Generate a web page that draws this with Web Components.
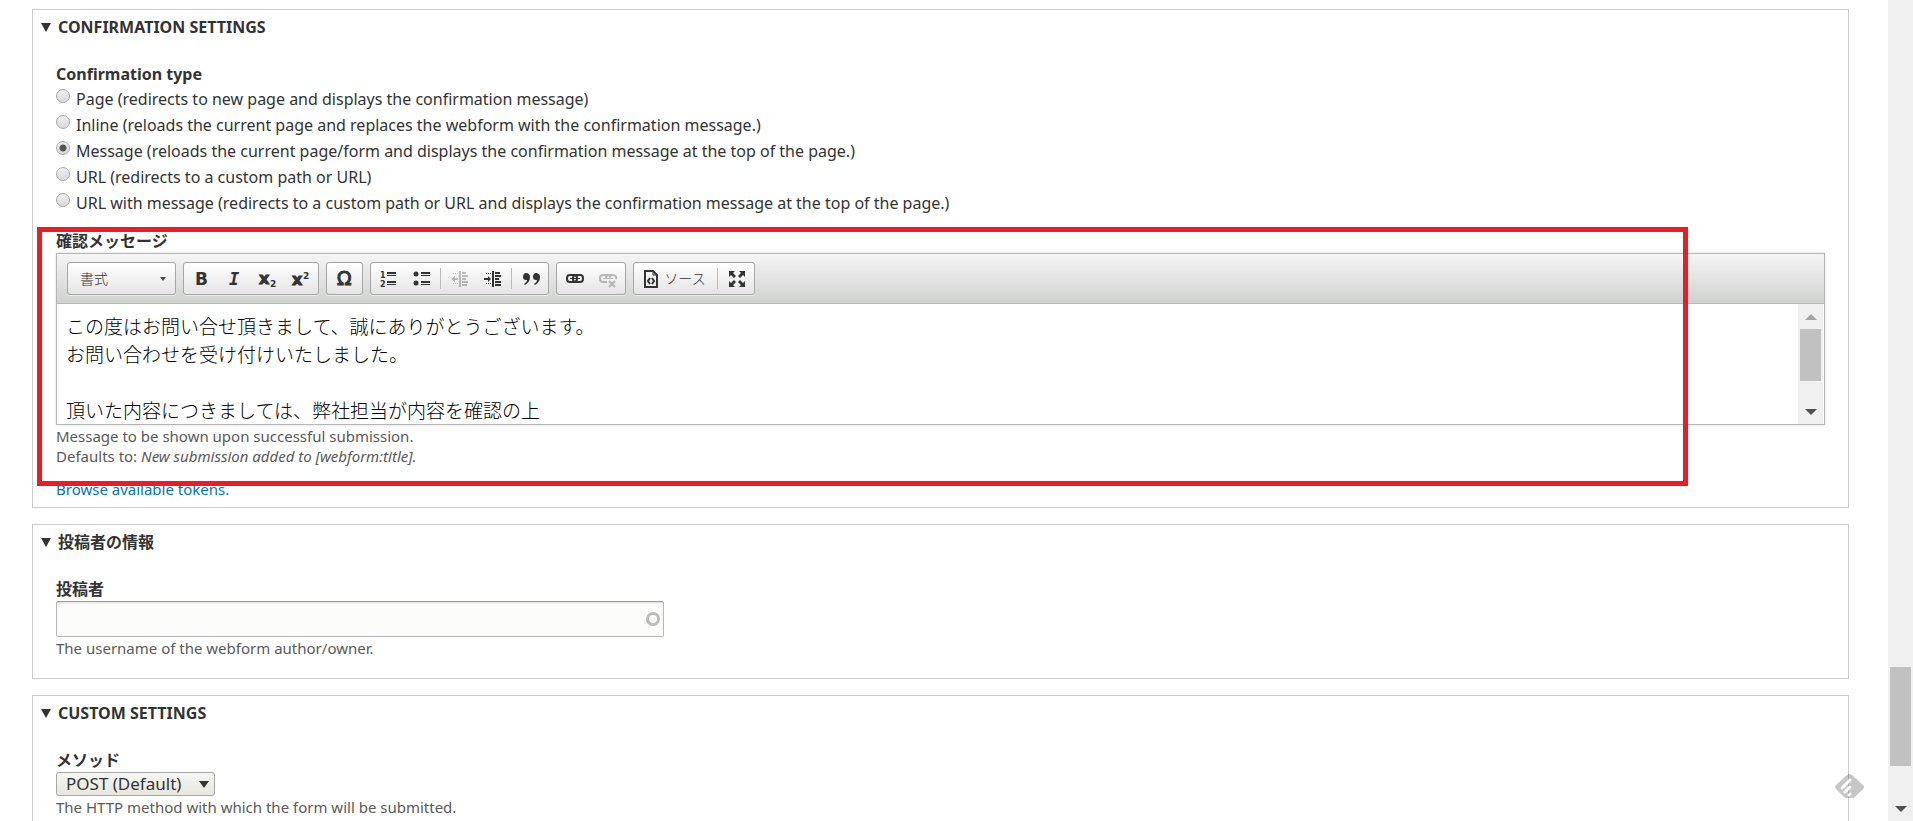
<!DOCTYPE html>
<html lang="ja">
<head>
<meta charset="utf-8">
<title>Webform settings</title>
<style>
    body {
        margin: 0;
        height: 100vh;
        overflow: hidden;
        background-color: #fff;
        color: #333;
        font-family: "Noto Sans", "Noto Sans CJK JP", sans-serif;
        font-size: 16px;
        line-height: 24px;
    }
</style>
</head>
<body>
<settings-page>
    <settings-panel heading="CONFIRMATION SETTINGS" style="--panel-end: 8px">
        <confirmation-types></confirmation-types>
        <message-editor label="確認メッセージ">この度はお問い合せ頂きまして、誠にありがとうございます。
お問い合わせを受け付けいたしました。

頂いた内容につきましては、弊社担当が内容を確認の上</message-editor>
        <help-text>Message to be shown upon successful submission.<br>Defaults to: <em>New submission added to [webform:title].</em></help-text>
        <token-link href="#tokens">Browse available tokens.</token-link>
        <highlight-box></highlight-box>
    </settings-panel>
    <settings-panel heading="投稿者の情報">
        <author-field label="投稿者"></author-field>
        <help-text>The username of the webform author/owner.</help-text>
    </settings-panel>
    <settings-panel heading="CUSTOM SETTINGS">
        <method-field label="メソッド"></method-field>
        <help-text>The HTTP method with which the form will be submitted.</help-text>
    </settings-panel>
    <scroll-rail slot="rail" style="--before: 667; --thumb: 99; --after: 30"></scroll-rail>
    <feed-badge slot="badge"></feed-badge>
</settings-page>

<script>
// Shared helper: open shadow root filled from a template
class BaseElement extends HTMLElement {
    constructor() {
        super();
        const template = document.createElement('template');
        template.innerHTML = this.constructor.markup;
        this.attachShadow({mode: 'open'});
        this.shadowRoot.appendChild(template.content.cloneNode(true));
    }
    $(selector) {
        return this.shadowRoot.querySelector(selector);
    }
}

class SettingsPage extends BaseElement {
    static markup = `
    <style>
        :host {
            display: flex;
            height: 100%;
        }
        main {
            flex: 1;
            min-width: 0;
            display: flex;
            flex-direction: column;
            gap: 16px;
            padding: 9px 39px 0 32px;
            overflow: hidden;
        }
    </style>
    <main><slot></slot></main>
    <slot name="rail"></slot>
    <slot name="badge"></slot>
    `;
}

class SettingsPanel extends BaseElement {
    static markup = `
    <style>
        :host {
            display: block;
            flex: none;
            position: relative;
            border: 1px solid #ccc;
        }
        summary {
            display: flex;
            align-items: center;
            gap: 7px;
            padding: 5px 8px 0;
            font-weight: 700;
            list-style: none;
            cursor: pointer;
        }
        .content {
            padding: 23px 23px var(--panel-end, 20px);
        }
    </style>
    <details open>
        <summary>
            <svg width="10" height="9" viewBox="0 0 10 9"><path d="M0 0h10L5 9z" fill="#333"/></svg>
            <span class="title"></span>
        </summary>
        <div class="content"><slot></slot></div>
    </details>
    `;
    connectedCallback() {
        this.$('.title').textContent = this.getAttribute('heading');
    }
}

class ConfirmationTypes extends BaseElement {
    static options = [
        ['page', 'Page (redirects to new page and displays the confirmation message)'],
        ['inline', 'Inline (reloads the current page and replaces the webform with the confirmation message.)'],
        ['message', 'Message (reloads the current page/form and displays the confirmation message at the top of the page.)'],
        ['url', 'URL (redirects to a custom path or URL)'],
        ['url_message', 'URL with message (redirects to a custom path or URL and displays the confirmation message at the top of the page.)']
    ];
    static markup = `
    <style>
        :host { display: block; margin-bottom: 13px; }
        fieldset { border: 0; margin: 0; padding: 0; min-width: 0; }
        legend { padding: 0; font-weight: 700; }
        .option {
            display: flex;
            align-items: flex-start;
            gap: 6px;
            line-height: 26px;
        }
        input {
            appearance: none;
            box-sizing: border-box;
            flex: none;
            width: 14px;
            height: 14px;
            margin: 3px 0 0;
            border: 1px solid #a9a9a9;
            border-radius: 50%;
            background: linear-gradient(#eee, #dadada);
        }
        input:checked {
            background: radial-gradient(circle, #555 3px, transparent 4px), linear-gradient(#eee, #dadada);
        }
    </style>
    <fieldset>
        <legend>Confirmation type</legend>
        <div class="rows"></div>
    </fieldset>
    `;
    connectedCallback() {
        this.$('.rows').innerHTML = ConfirmationTypes.options.map(([id, text]) => `
            <div class="option">
                <input type="radio" name="type" id="${id}" value="${id}"${id === 'message' ? ' checked' : ''}>
                <label for="${id}">${text}</label>
            </div>`).join('');
    }
}

class MessageEditor extends BaseElement {
    static markup = `
    <style>
        :host { display: block; }
        label { display: block; font-weight: 700; }
        .editor {
            border: 1px solid #b6b6b6;
            box-shadow: 0 0 3px rgba(0, 0, 0, .15);
        }
        .toolbar {
            display: flex;
            flex-wrap: wrap;
            gap: 7px;
            padding: 8px 10px;
            border-bottom: 1px solid #b6b6b6;
            background: linear-gradient(#f5f5f5, #cfd1cf);
        }
        .group {
            display: flex;
            align-items: center;
            box-sizing: border-box;
            height: 33px;
            padding: 0 1px;
            border: 1px solid #a6a6a6;
            border-radius: 3px;
            background: linear-gradient(#fff, #e4e4e4);
            box-shadow: 0 1px 0 rgba(255, 255, 255, .5);
        }
        .combo { position: relative; padding: 0; }
        .combo svg {
            position: absolute;
            right: 9px;
            top: 14px;
            pointer-events: none;
        }
        select {
            appearance: none;
            width: 107px;
            height: 31px;
            padding: 0 12px 2px;
            border: 0;
            background: none;
            color: #333;
            font: 300 14px "Noto Sans CJK JP", sans-serif;
        }
        button {
            display: flex;
            align-items: center;
            justify-content: center;
            gap: 6px;
            width: 33px;
            height: 31px;
            padding: 0;
            border: 0;
            background: none;
            color: #333;
        }
        button:disabled { opacity: .3; }
        .source {
            width: 80px;
            color: #333;
            font: 300 14px "Noto Sans CJK JP", sans-serif;
        }
        .source span { padding-bottom: 2px; }
        .sep {
            width: 1px;
            height: 21px;
            margin: 0 2px;
            background-color: #bcbcbc;
        }
        svg { display: block; flex: none; overflow: visible; }
        text { font-family: "DejaVu Sans", sans-serif; font-weight: 700; }
        .area { display: flex; padding-right: 1px; }
        textarea {
            flex: 1;
            min-width: 0;
            height: 120px;
            box-sizing: border-box;
            padding: 8px 9px 0;
            border: 0;
            outline: 0;
            resize: none;
            overflow: hidden;
            background-color: #fff;
            color: #000;
            font: 300 19px/28px "Noto Sans CJK JP", sans-serif;
        }
    </style>
    <label for="message"></label>
    <div class="editor">
        <div class="toolbar">
            <div class="group combo">
                <select aria-label="書式"><option>書式</option></select>
                <svg width="6" height="4" viewBox="0 0 6 4"><path d="M0 0h6L3 4z" fill="#474747"/></svg>
            </div>
            <div class="group">
                <button type="button" aria-label="Bold"><svg width="20" height="20" fill="#333"><text x="3" y="16" font-size="17">B</text></svg></button>
                <button type="button" aria-label="Italic"><svg width="20" height="20" fill="#333"><text x="4" y="16" font-size="17" font-style="italic" style="font-family:'DejaVu Sans Mono'">I</text></svg></button>
                <button type="button" aria-label="Subscript"><svg width="20" height="20" fill="#333"><text x="1" y="15" font-size="16" stroke="#333">x</text><text x="12" y="18" font-size="9">2</text></svg></button>
                <button type="button" aria-label="Superscript"><svg width="20" height="20" fill="#333"><text x="1" y="16" font-size="16" stroke="#333">x</text><text x="12" y="10" font-size="9">2</text></svg></button>
            </div>
            <div class="group">
                <button type="button" aria-label="Special character"><svg width="20" height="24" fill="#333"><text x="2" y="18" font-size="19" style="font-family:'DejaVu Sans';font-weight:400" stroke="#333">Ω</text></svg></button>
            </div>
            <div class="group">
                <button type="button" aria-label="Numbered list"><svg width="18" height="18" fill="#333">
                    <text x="0" y="8" font-size="8">1</text><text x="0" y="17" font-size="8">2</text>
                    <path d="M7 2h9v2H7zM7 5h9v1H7zM7 11h9v2H7zM7 14h9v1H7z"/></svg></button>
                <button type="button" aria-label="Bulleted list"><svg width="18" height="18" fill="#333">
                    <circle cx="3" cy="4" r="2.5"/><circle cx="3" cy="13" r="2.5"/>
                    <path d="M8 2h9v2H8zM8 5h9v1H8zM8 11h9v2H8zM8 14h9v1H8z"/></svg></button>
                <span class="sep"></span>
                <button type="button" aria-label="Decrease indent" disabled><svg width="18" height="18" fill="#333">
                    <path d="M8 1h2v16H8zM11 2h4v2h-4zM11 5h6v2h-6zM11 8h4v2h-4zM11 11h6v2h-6zM11 14h5v2h-5z"/>
                    <path d="M2 3h1v1H2zM4 3h1v1H4zM6 3h1v1H6zM2 13h1v1H2zM4 13h1v1H4zM6 13h1v1H6zM0 9l4-3v2h3v2H4v2z"/></svg></button>
                <button type="button" aria-label="Increase indent"><svg width="18" height="18" fill="#333">
                    <path d="M8 1h2v16H8zM11 2h5v2h-5zM11 5h6v2h-6zM11 8h4v2h-4zM11 11h6v2h-6zM11 14h6v2h-6z"/>
                    <path d="M2 3h1v1H2zM4 3h1v1H4zM6 3h1v1H6zM2 13h1v1H2zM4 13h1v1H4zM6 13h1v1H6zM7 9L4 6v2H0v2h4v2z"/></svg></button>
                <span class="sep"></span>
                <button type="button" aria-label="Block quote"><svg width="18" height="18" fill="#333">
                    <path d="M4 3c2 0 4 1 4 4 0 4-2 6-5 8l-1-1c2-1 3-3 3-4H4C2 10 1 9 1 7s1-4 3-4zM14 3c2 0 4 1 4 4 0 4-2 6-5 8l-1-1c2-1 3-3 3-4h-1c-2 0-3-1-3-3s1-4 3-4z"/></svg></button>
            </div>
            <div class="group">
                <button type="button" aria-label="Link"><svg width="18" height="18" fill="none" stroke="#333" stroke-width="2">
                    <rect x="1" y="5" width="10" height="7" rx="3"/><rect x="7" y="5" width="10" height="7" rx="3"/><path d="M4 8.500h10" stroke-width="1"/></svg></button>
                <button type="button" aria-label="Unlink" disabled><svg width="18" height="18" fill="none" stroke="#333" stroke-width="2">
                    <path d="M8 12H4a3 3 0 0 1-3-3V8a3 3 0 0 1 3-3h5a2 2 0 0 1 2 3M7 9V8a3 3 0 0 1 3-3h4a3 3 0 0 1 3 4"/><path d="M4 8.500h10" stroke-width="1"/><path d="M10 11l6 6M16 11l-6 6"/></svg></button>
            </div>
            <div class="group">
                <button type="button" class="source"><svg width="14" height="18" fill="none" stroke="#333" stroke-width="2">
                    <path d="M1 1h8l4 4v12H1z"/><path d="M9 1v4h4" stroke-width="1"/><path d="M6 8l-2 3 2 3M8 8l2 3-2 3"/></svg><span>ソース</span></button>
                <span class="sep"></span>
                <button type="button" aria-label="Maximize"><svg width="18" height="18" fill="#333">
                    <path d="M1 1h6L5 3l3 3-2 2-3-3-2 2zM17 1v6l-2-2-3 3-2-2 3-3-2-2zM1 17v-6l2 2 3-3 2 2-3 3 2 2zM17 17h-6l2-2-3-3 2-2 3 3 2-2z"/></svg></button>
            </div>
        </div>
        <div class="area">
            <textarea id="message" spellcheck="false"></textarea>
            <scroll-rail up style="--before: 0; --thumb: 53; --after: 18"></scroll-rail>
        </div>
    </div>
    `;
    connectedCallback() {
        this.$('label').textContent = this.getAttribute('label');
        this.$('textarea').textContent = this.textContent;
    }
}

class HelpText extends BaseElement {
    static markup = `
    <style>
        :host {
            display: block;
            margin-top: 1px;
            color: #595959;
            font-size: 15px;
            line-height: 20px;
        }
    </style>
    <slot></slot>
    `;
}

class TokenLink extends BaseElement {
    static markup = `
    <style>
        :host {
            display: block;
            margin-top: 13px;
            font-size: 15px;
            line-height: 20px;
        }
        a { color: #0074bd; text-decoration: none; }
        a:hover { text-decoration: underline; }
    </style>
    <a><slot></slot></a>
    `;
    connectedCallback() {
        this.$('a').href = this.getAttribute('href');
    }
}

// Red frame laid over the message part of the panel
class HighlightBox extends BaseElement {
    static markup = `
    <style>
        :host {
            position: absolute;
            top: 217px;
            right: 160px;
            bottom: 21px;
            left: 4px;
            border: 5px solid #ed1c24;
            pointer-events: none;
        }
    </style>
    `;
}

class AuthorField extends BaseElement {
    static markup = `
    <style>
        :host { display: block; }
        label { display: block; font-weight: 700; }
        .box {
            position: relative;
            width: 608px;
            max-width: 100%;
        }
        input {
            display: block;
            box-sizing: border-box;
            width: 100%;
            height: 36px;
            padding: 4px 30px 4px 8px;
            border: 1px solid #b8b8b8;
            border-top-color: #999;
            border-radius: 2px;
            background-color: #fcfcfa;
            box-shadow: inset 0 1px 2px rgba(0, 0, 0, .12);
            color: #333;
            font: inherit;
        }
        svg {
            position: absolute;
            top: 11px;
            right: 4px;
            pointer-events: none;
        }
    </style>
    <label for="author"></label>
    <div class="box">
        <input type="text" id="author">
        <svg width="14" height="14"><circle cx="7" cy="7" r="5.5" fill="none" stroke="#bbb" stroke-width="3"/></svg>
    </div>
    `;
    connectedCallback() {
        this.$('label').textContent = this.getAttribute('label');
    }
}

class MethodField extends BaseElement {
    static markup = `
    <style>
        :host { display: block; }
        label { display: block; font-weight: 700; }
        .box {
            position: relative;
            width: 159px;
        }
        select {
            appearance: none;
            display: block;
            box-sizing: border-box;
            width: 100%;
            height: 24px;
            padding: 0 24px 0 9px;
            border: 1px solid #a6a6a6;
            border-radius: 3px;
            background: linear-gradient(#f6f6f3, #e7e7df);
            color: #333;
            font: 17px/22px "Noto Sans", sans-serif;
        }
        svg {
            position: absolute;
            top: 9px;
            right: 6px;
            pointer-events: none;
        }
    </style>
    <label for="method"></label>
    <div class="box">
        <select id="method"><option>POST (Default)</option><option>POST</option><option>GET</option></select>
        <svg width="10" height="7" viewBox="0 0 10 7"><path d="M0 0h10L5 7z" fill="#333"/></svg>
    </div>
    `;
    connectedCallback() {
        this.$('label').textContent = this.getAttribute('label');
    }
}

class ScrollRail extends BaseElement {
    static markup = `
    <style>
        :host {
            display: flex;
            flex-direction: column;
            flex: none;
            width: 25px;
            background-color: #f0f0f0;
        }
        .arrow {
            display: flex;
            align-items: center;
            justify-content: center;
            height: 25px;
        }
        .up { display: none; }
        :host([up]) .up { display: flex; }
        .before { flex: var(--before) 1 0; }
        .after { flex: var(--after) 1 0; }
        .thumb {
            flex: var(--thumb) 1 0;
            margin: 0 2px;
            background-color: #c1c1c1;
        }
    </style>
    <div class="arrow up"><svg width="12" height="6"><path d="M0 6h12L6 0z" fill="#a3a3a3"/></svg></div>
    <div class="before"></div>
    <div class="thumb"></div>
    <div class="after"></div>
    <div class="arrow"><svg width="12" height="6"><path d="M0 0h12L6 6z" fill="#505050"/></svg></div>
    `;
}

class FeedBadge extends BaseElement {
    static markup = `
    <style>
        :host {
            position: fixed;
            right: 49px;
            bottom: 22px;
            line-height: 0;
        }
    </style>
    <svg width="29" height="25">
        <path d="M12 1q2-2 5 0l11 10q2 2 0 4l-8 8q-1 1-3 1h-5q-2 0-3-1l-8-8q-2-2 0-4z" fill="#000" fill-opacity=".22"/>
        <path d="M7 14l8-8M10 18l5-5M14 21l1-1" stroke="#fff" stroke-width="3" stroke-linecap="round"/>
    </svg>
    `;
}

customElements.define('scroll-rail', ScrollRail);
customElements.define('settings-page', SettingsPage);
customElements.define('settings-panel', SettingsPanel);
customElements.define('confirmation-types', ConfirmationTypes);
customElements.define('message-editor', MessageEditor);
customElements.define('help-text', HelpText);
customElements.define('token-link', TokenLink);
customElements.define('highlight-box', HighlightBox);
customElements.define('author-field', AuthorField);
customElements.define('method-field', MethodField);
customElements.define('feed-badge', FeedBadge);
</script>
</body>
</html>
